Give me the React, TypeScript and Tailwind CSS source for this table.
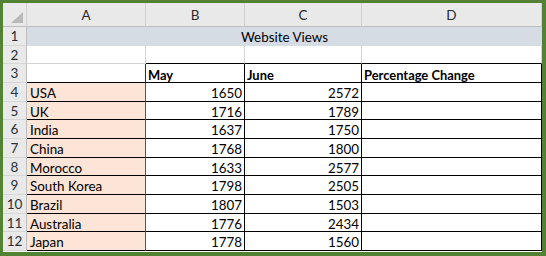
import React from "react";

const rows: [string, number, number][] = [
  ["USA", 1650, 2572],
  ["UK", 1716, 1789],
  ["India", 1637, 1750],
  ["China", 1768, 1800],
  ["Morocco", 1633, 2577],
  ["South Korea", 1798, 2505],
  ["Brazil", 1807, 1503],
  ["Australia", 1776, 2434],
  ["Japan", 1778, 1560],
];

const rowHead =
  "bg-[#e9e9e9] border-r border-b border-r-[#bdbdbd] border-b-[#d6d6d6] flex items-center justify-center pt-[2px] text-[#2a2f3a] text-[13.5px]";
const colHead =
  "bg-[#e9e9e9] border-r border-b border-r-[#d0d0d0] border-b-[#bdbdbd] flex items-center justify-center pt-[3px] text-[#2a2a2a] text-[13.5px]";

export default function App() {
  return (
    <div
      className="w-[546px] h-[256px] bg-[#548235] pl-[3px] pt-[3px] pr-[4px] pb-[4px]"
      style={{ fontFamily: "Lato, 'Liberation Sans', sans-serif" }}
    >
      <div className="grid w-full h-full bg-white grid-cols-[24px_119px_99px_117px_180px] grid-rows-[24px_19px_18px_19px_19px_18px_19px_19px_18px_19px_19px_18px_19px] text-[13.4px] text-black leading-none">
        {/* header */}
        <div className="relative bg-[#e9e9e9] border-r border-b border-r-[#d0d0d0] border-b-[#bdbdbd]">
          <svg className="absolute right-[3px] bottom-[3px]" width="12" height="11" viewBox="0 0 12 11">
            <polygon points="12,0 12,11 0,11" fill="#b9b9b9" />
          </svg>
        </div>
        <div className={colHead}>A</div>
        <div className={colHead}>B</div>
        <div className={colHead}>C</div>
        <div className={colHead + " border-r-[#bdbdbd]"}>D</div>

        {/* row 1 */}
        <div className={rowHead}>1</div>
        <div className="col-span-4 bg-[#d6dce4] flex items-center justify-center pt-[3px]">
          Website Views
        </div>

        {/* row 2 */}
        <div className={rowHead}>2</div>
        <div className="border-r border-b border-r-[#d4d4d4] border-b-[#d4d4d4]" />
        <div className="border-r border-b border-r-[#d4d4d4] border-b-black" />
        <div className="border-r border-b border-r-[#d4d4d4] border-b-black" />
        <div className="border-r border-b border-r-[#d4d4d4] border-b-black" />

        {/* row 3 */}
        <div className={rowHead}>3</div>
        <div className="border-r border-b border-r-[#333] border-b-black" />
        <div className="border-r border-b border-black flex items-center px-[2px] pt-[4px] font-bold text-[12.9px]">May</div>
        <div className="border-r border-b border-black flex items-center px-[2px] pt-[4px] font-bold text-[12.9px]">June</div>
        <div className="border-r border-b border-black flex items-center px-[2px] pt-[4px] font-bold text-[12.9px]">
          Percentage Change
        </div>

        {rows.map(([name, may, june], i) => (
          <React.Fragment key={name}>
            <div className={rowHead}>{i + 4}</div>
            <div className="bg-[#fce4d6] border-r border-b border-r-[#555] border-b-black flex items-center px-[3px] pt-[4px]">
              {name}
            </div>
            <div className="border-r border-b border-black flex items-center justify-end px-[2px] pt-[4px]">
              {may}
            </div>
            <div className="border-r border-b border-black flex items-center justify-end px-[2px] pt-[4px]">
              {june}
            </div>
            <div className="border-r border-b border-black" />
          </React.Fragment>
        ))}
      </div>
    </div>
  );
}
